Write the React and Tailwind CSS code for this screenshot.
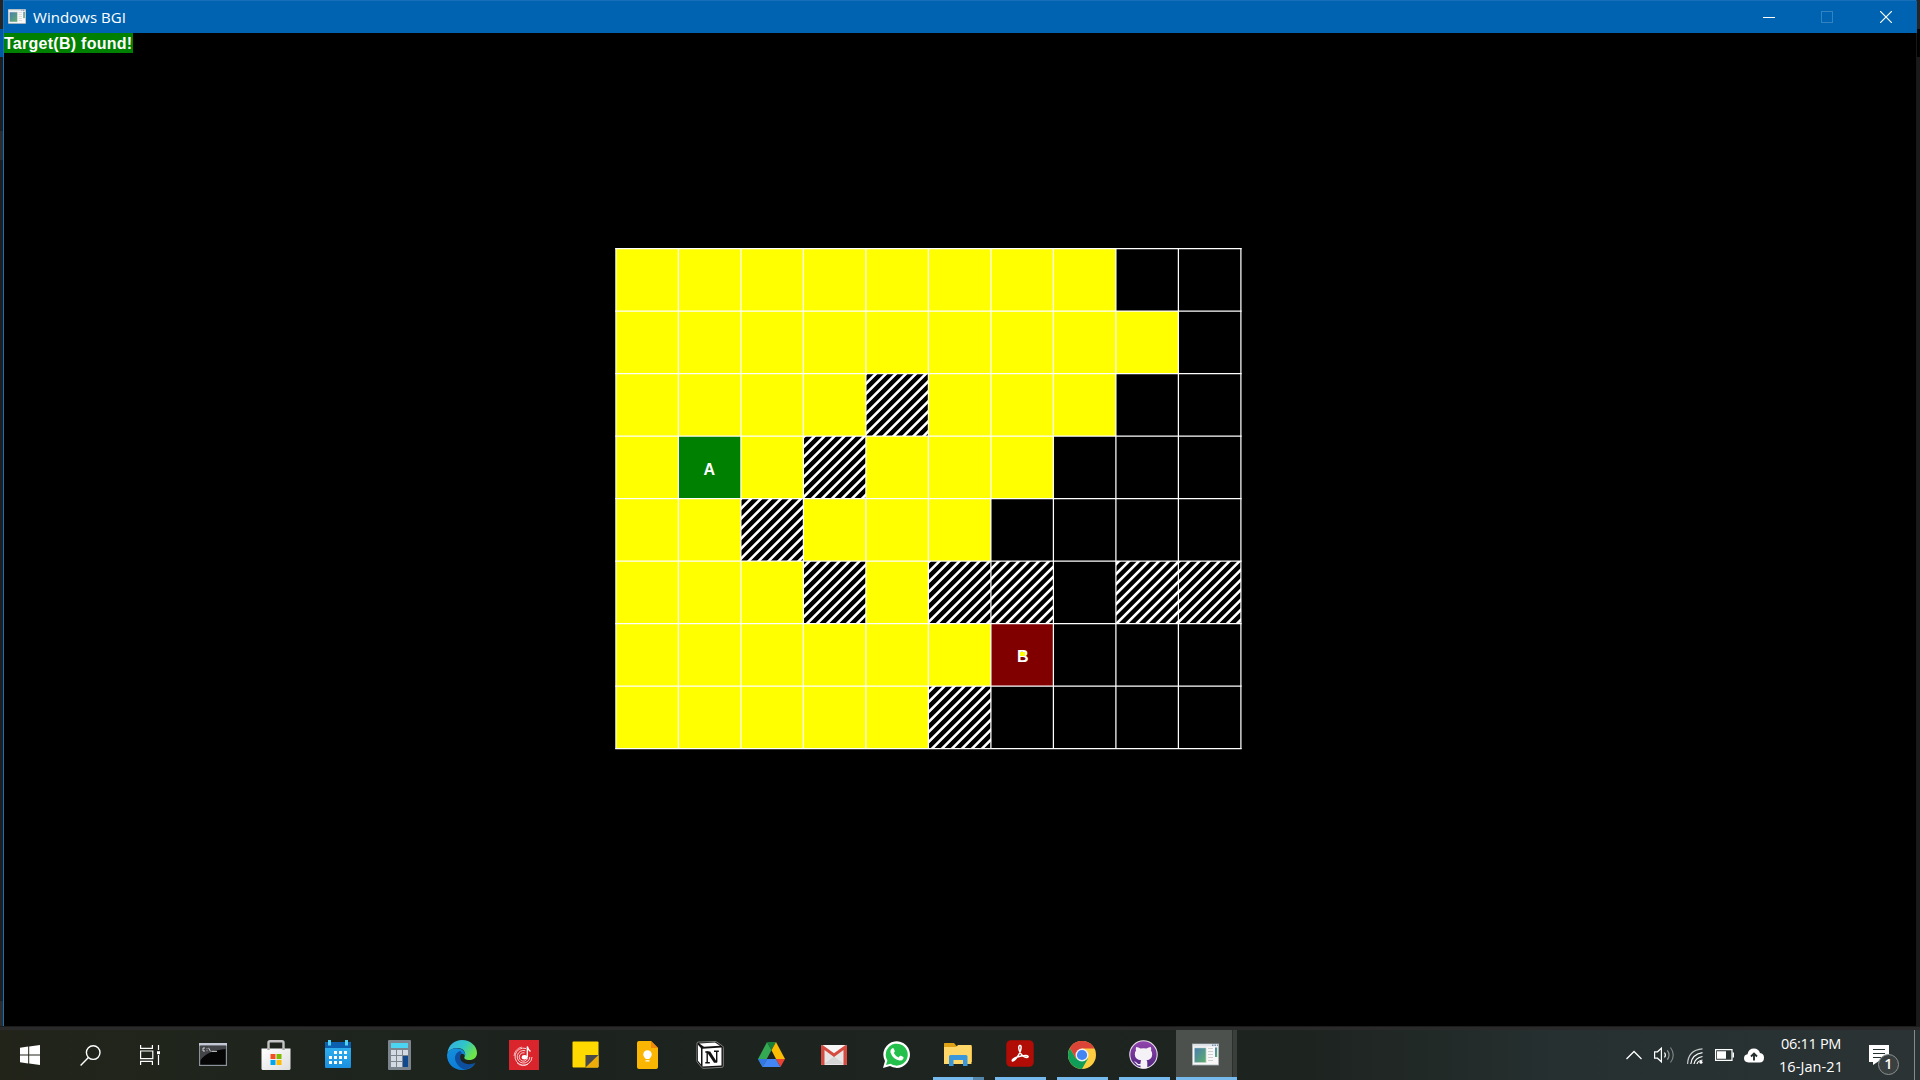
import React from 'react';

// '#' wall, 'y' visited, '.' empty, 'A' start, 'B' target
const MAP = [
  'yyyyyyyy..',
  'yyyyyyyyy.',
  'yyyy#yyy..',
  'yAy#yyy...',
  'yy#yyy....',
  'yyy#y##.##',
  'yyyyyyB...',
  'yyyyy#....',
];

const CELL = {
  y: 'bg-[#ffff00]',
  '.': 'bg-black',
  A: 'bg-[#008000]',
  B: 'bg-[#800000]',
  '#': 'bg-fixed bg-[repeating-linear-gradient(135deg,#fff_0px,#fff_0.6px,#000_1.5px,#000_5.07px,#fff_5.97px,#fff_7.071px)]',
};

function Board() {
  return (
    <div className="relative ml-[612px] mt-[195px] h-[501px] w-[626px]">
      <div className="grid h-[500px] w-[625px] grid-cols-[repeat(10,62.5px)] grid-rows-[repeat(8,62.5px)]">
        {MAP.join('').split('').map((c, i) => (
          <div key={i} className={`flex items-center justify-center ${CELL[c]}`}>
            {c === 'A' && (
              <span className="mt-[6px] mr-[1px] font-['Liberation_Sans',sans-serif] text-[16px] leading-none font-bold text-white">A</span>
            )}
            {c === 'B' && (
              <span className="relative mt-[6px] ml-[1px] font-['Liberation_Sans',sans-serif] text-[16px] leading-none font-bold text-white">
                <span>B</span>
                <i className="absolute top-[3px] left-[3px] h-[4px] w-[5px] bg-[#ffff00]" />
              </span>
            )}
          </div>
        ))}
      </div>
      <svg className="absolute inset-0 overflow-visible" width="626" height="501" stroke="#fff" strokeWidth="1.25">
        {Array.from({ length: 11 }, (_, i) => <path key={`v${i}`} d={`M${i * 62.5 - 0.1} 0V501`} />)}
        {Array.from({ length: 9 }, (_, i) => <path key={`h${i}`} d={`M-.7 ${i * 62.5 + 0.5}H625.6`} />)}
      </svg>
    </div>
  );
}

function WindowIcon({ w, h }) {
  return (
    <svg width={w} height={h} viewBox="0 0 27 22">
      <defs>
        <linearGradient id="scr" x1="0" y1="0" x2="1" y2="1">
          <stop offset="0" stopColor="#4a7fb0" /><stop offset="1" stopColor="#5fae6c" />
        </linearGradient>
      </defs>
      <rect width="27" height="22" fill="#98a0a6" />
      <rect x="0.8" y="0.8" width="25.4" height="20.4" fill="#f8f8f8" />
      <rect x="0.8" y="0.8" width="25.4" height="2.2" fill="#dfe4ea" />
      <path d="M20 1h1.5v1.5H20zM22.5 1H24v1.5h-1.5zM25 1h1v1.5h-1z" fill="#7993b0" />
      <rect x="2" y="4" width="12.5" height="15.5" fill="#d4d8d8" />
      <rect x="2.7" y="4.7" width="11" height="14" fill="url(#scr)" />
      <path d="M16 5h5M16 8h5M16 11h5M16 14h5M16 17h5" stroke="#cfcfcf" strokeWidth="1" />
      <rect x="23" y="4" width="2.2" height="9.5" fill="url(#scr)" />
    </svg>
  );
}

const Start = () => (
  <svg width="20" height="20" viewBox="0 0 20 20" fill="#fff">
    <path d="M0 2.8 8.2 1.6V9.4H0zM9.2 1.4 20 0V9.4H9.2zM0 10.4H8.2V18.4L0 17.2zM9.2 10.4H20V20L9.2 18.5z" />
  </svg>
);
const Search = () => (
  <svg width="21" height="21" viewBox="0 0 21 21" fill="none" stroke="#fff" strokeWidth="1.4">
    <circle cx="13.2" cy="7.6" r="6.8" /><path d="M8.4 12.4 0.6 20.4" />
  </svg>
);
const TaskView = () => (
  <svg width="20" height="20" viewBox="0 0 20 20" fill="none" stroke="#fff" strokeWidth="1.2">
    <path d="M.6 0V3.4H12.4V0M.6 20V16.4H12.4V20M.6 6H12.8V13.6H.6zM18.5 0V5M18.5 10V20" />
    <rect x="17" y="6.2" width="3" height="3" fill="#fff" stroke="none" />
  </svg>
);
const Cmd = () => (
  <svg width="28" height="23" viewBox="0 0 28 23">
    <rect x=".6" y=".6" width="26.8" height="21.8" fill="#050505" stroke="#8b919b" strokeWidth="1.2" />
    <path d="M1 3H27V6C15 7 6 10 1 18z" fill="#424448" />
    <rect x="0" y="0" width="28" height="2.6" fill="#c3c8d4" />
    <path d="M6 5H4v3h2M8 5.4v.8M8 7.4v.8M9.5 4.8l2 3.6M12.5 8.4H18" stroke="#ddd" fill="none" strokeWidth=".9" />
  </svg>
);
const Store = () => (
  <svg width="30" height="30" viewBox="0 0 30 30">
    <defs><linearGradient id="bag" x2="1" y2="1"><stop stopColor="#fff" /><stop offset="1" stopColor="#dedede" /></linearGradient></defs>
    <path d="M7.5 11V2.7Q7.5 1.2 9 1.2H21Q22.5 1.2 22.5 2.7V11" fill="none" stroke="#c4c4c4" strokeWidth="2.4" />
    <path d="M.5 8.5H29.5V28.5Q29.5 30 28 30H2Q.5 30 .5 28.5z" fill="url(#bag)" />
    <path d="M7.5 8V10M22.5 8V10" stroke="#aaa" strokeWidth="2.4" />
    <path d="M9.5 14h5v5h-5z" fill="#f25022" /><path d="M15.5 14h5v5h-5z" fill="#7fba00" />
    <path d="M9.5 20h5v5h-5z" fill="#00a4ef" /><path d="M15.5 20h5v5h-5z" fill="#ffb900" />
  </svg>
);
const Calendar = () => (
  <svg width="26" height="28" viewBox="0 0 26 28">
    <defs><linearGradient id="cal" x2="0" y2="1"><stop stopColor="#33b8f2" /><stop offset="1" stopColor="#1a8fe0" /></linearGradient></defs>
    <rect y="2" width="26" height="26" rx="1" fill="url(#cal)" />
    <path d="M0 3q0-1 1-1H25q1 0 1 1V8H0z" fill="#0c5fae" />
    <path d="M4.5 0V5.5M21.5 0V5.5" stroke="#50d3f5" strokeWidth="3" />
    <path d="M9 11h3v3H9zM14 11h3v3h-3zM19 11h3v3h-3zM4 16h3v3H4zM9 16h3v3H9zM14 16h3v3h-3zM19 16h3v3h-3zM4 21h3v3H4zM9 21h3v3H9zM14 21h3v3h-3z" fill="#fff" />
  </svg>
);
const Calc = () => (
  <svg width="23" height="30" viewBox="0 0 23 30">
    <rect width="23" height="30" rx="1" fill="#7c858e" />
    <rect x="3" y="3" width="17" height="5" fill="#4bd5f2" />
    <path d="M3 10h5v5H3zM9 10h5v5H9zM15 10h5v5h-5zM3 16h5v5H3zM9 16h5v5H9zM3 22h5v5H3zM9 22h5v5H9z" fill="#d3dae1" />
    <path d="M15 16h5v11h-5z" fill="#11498f" />
  </svg>
);
const Edge = () => (
  <svg width="30" height="30" viewBox="0 0 30 30">
    <defs>
      <linearGradient id="e1" x2="1" y2=".5"><stop stopColor="#37a9e8" /><stop offset=".55" stopColor="#2fc5c9" /><stop offset="1" stopColor="#6ee448" /></linearGradient>
      <linearGradient id="e2" x2=".6" y2="1"><stop stopColor="#1590dc" /><stop offset="1" stopColor="#0b7bd5" /></linearGradient>
    </defs>
    <path d="M.4 13C1.5 5 7.5 0 15 0C23.5 0 30 6 30 13C30 17.5 26.5 20 22.5 20C18.5 20 16.5 18.500 17.5 17C19.5 14 17.5 8 10.5 8C6 8 2 10 .4 13z" fill="url(#e1)" />
    <path d="M0 15C.5 10.5 5 8 10 8.2C16 8.5 19.5 12.5 17.8 16.400C17.5 13 13 12.500 12 17C11 22 17 26 22 25.5C25 25.2 27 24 28.3 23C26 27.5 21 30 15 30C6.5 30 0 23.5 0 15z" fill="url(#e2)" />
    <path d="M12.8 11C8 13 7 18 9 22C11 26 14.5 29 18 29.7C23 28.6 26.500 26 28.3 22.8C24 25 18 24.5 15.3 21.8C12.5 19.5 12.5 15 15 13.2C14.5 12 13.8 11.2 12.8 11z" fill="#0d4f9e" />
  </svg>
);
const Music = () => (
  <svg width="30" height="30" viewBox="0 0 30 30">
    <rect width="30" height="30" fill="#da252c" />
    <g fill="none" stroke="#fff" strokeWidth=".8">
      <path d="M17 8.5A8.500 8.500 0 1 0 23 17M16.300 10.7A6.3 6.300 0 1 0 20.8 17M15.5 12.9A4.2 4.2 0 1 0 18.6 17.5" />
      <path d="M5 16A9.500 9.500 0 0 1 13 7M8 23A9.5 9.500 0 0 0 19 24.300" strokeWidth=".6" />
      <path d="M18.3 17V6.5Q19 9.500 21.5 11.5" strokeWidth="1.3" />
    </g>
    <ellipse cx="15.5" cy="17.200" rx="2.8" ry="2.2" fill="#fff" />
  </svg>
);
const Sticky = () => (
  <svg width="27" height="27" viewBox="0 0 27 27">
    <rect x=".5" y=".5" width="26" height="26" rx="1" fill="#ffd900" />
    <path d="M26.5 14v11.5q0 1-1 1H13.5z" fill="#efad0c" />
    <path d="M13.5 14h13L13.5 26.5z" fill="#494949" />
  </svg>
);
const Keep = () => (
  <svg width="21" height="28" viewBox="0 0 21 28">
    <path d="M2 0H14L21 7V26q0 2-2 2H2q-2 0-2-2V2q0-2 2-2z" fill="#fbb604" />
    <path d="M14 0l7 7h-7z" fill="#f08a0c" />
    <circle cx="10.5" cy="13.5" r="4.2" fill="#fff" /><path d="M8.5 15h4v3h-4zM8.5 19.2h4v1.2h-4z" fill="#fff" />
  </svg>
);
const Notion = () => (
  <svg width="28" height="28" viewBox="0 0 28 28">
    <path d="M1 2.2Q1 1.2 2.2 1.1L19 .5Q20 .4 21 1.2L26.5 5Q27.3 5.6 27.3 6.5V25Q27.3 26.2 26 26.3L8 27.3Q6.5 27.4 5.8 26.5L1.2 21Q.8 20.5.8 19.5z" fill="#111" stroke="#aaa" strokeWidth=".7" />
    <path d="M3.2 2.5 19 1.6 24 4.8 8 5.8z" fill="#fff" />
    <path d="M6.5 7.7 25.5 6.6V24.5L6.5 25.6z" fill="#fff" />
    <path d="M2 3.8 5 7.3V23.5L2 19.8z" fill="#fff" />
    <path d="M11.2 11V21.800M9.3 21.8H13.8M20.700 10.500V21M18 10.300H22.800M9.300 11H12.500" fill="none" stroke="#111" strokeWidth="1.4" />
    <path d="M10.5 10.5H14.200L21.4 21.7H18z" fill="#111" />
  </svg>
);
const Drive = () => (
  <svg width="27" height="25" viewBox="0 0 27 25">
    <path d="M9 0 13.5 8 4.5 25 0 17z" fill="#34a853" />
    <path d="M9 0H18L13.5 8.2z" fill="#188038" />
    <path d="M18 0 27 17H18L13.5 8.2z" fill="#fbbc04" />
    <path d="M4.5 25 9 17H18L22.5 25z" fill="#4285f4" />
    <path d="M0 17H9L4.5 25z" fill="#3576e6" /><path d="M18 17H27L22.5 25z" fill="#ea4335" />
  </svg>
);
const Gmail = () => (
  <svg width="26" height="20" viewBox="0 0 26 20">
    <rect width="26" height="20" rx="1.5" fill="#e6e6e6" />
    <path d="M3 19 13 11.5 23 19z" fill="#d5d5d5" />
    <path d="M2 0H24L13 8.5z" fill="#f6f6f6" />
    <path d="M0 1.5Q0 0 1.5 0L13 8.2 24.5 0Q26 0 26 1.5V18.5Q26 20 24.5 20H22.5V5L13 12 3.5 5V20H1.5Q0 20 0 18.5z" fill="#d54b3f" />
  </svg>
);
const WhatsApp = () => (
  <svg width="27" height="27" viewBox="0 0 27 27">
    <path d="M0 27 2 20A13.3 13.3 0 1 1 7 25.1z" fill="#fff" />
    <path d="M3 24 4.4 19.5A11 11 0 1 1 7.6 22.8z" fill="#25c04c" />
    <path d="M9.5 7.2Q10.3 6.8 10.8 7.8L11.8 10Q12 10.7 10.8 12 12.5 15.3 15.5 16.4L16.8 14.9Q17.3 14.5 18 14.8L20.3 16Q20.8 16.4 20.3 17.7 19.2 19.8 16.5 19.5 9.8 18.2 7.5 11.5 7 8.5 9.5 7.2z" fill="#fff" />
  </svg>
);
const Folder = () => (
  <svg width="28" height="24" viewBox="0 0 28 24">
    <path d="M0 1.5Q0 1 .8 1H10l2.5 3H27Q28 4 28 5V20H0z" fill="#dfa116" />
    <path d="M0 5H12l2-2H27.5V22H0z" fill="#ffd768" />
    <path d="M5 24V14.5Q5 13 6.5 13H22Q23.5 13 23.5 14.5V24H19V18H9.500V24z" fill="#3b97db" />
  </svg>
);
const Acrobat = () => (
  <svg width="28" height="27" viewBox="0 0 28 27">
    <rect x=".3" y=".3" width="27.4" height="26.4" rx="4.5" fill="#b10c05" />
    <path d="M13.7 5.5Q15.5 5 15 8.5 14.5 13 10 18.5 7 21.8 6.3 20.8 5.8 19.2 10.5 17.3 15.5 15.5 20 15.6 22.6 15.8 22 17 21 18.2 17.5 16.3 13.5 13.5 12.7 8 12.6 5.8 13.7 5.5z" fill="none" stroke="#fff" strokeWidth="1.5" />
  </svg>
);
const Chrome = () => (
  <svg width="28" height="28" viewBox="0 0 28 28">
    <circle cx="14" cy="14" r="14" fill="#ffcd40" />
    <path d="M1.9 7A14 14 0 0 0 14 28L20 17.5 8 17.5z" fill="#0f9d58" />
    <path d="M1.9 7A14 14 0 0 1 26.5 7.5H14L8 17.5z" fill="#db4437" />
    <circle cx="14" cy="14" r="6.5" fill="#f1f1f1" /><circle cx="14" cy="14" r="5.1" fill="#4285f4" />
  </svg>
);
const Github = () => (
  <svg width="29" height="29" viewBox="0 0 29 29">
    <defs><linearGradient id="gh" x2="0" y2="1"><stop stopColor="#9345ae" /><stop offset="1" stopColor="#4f2580" /></linearGradient></defs>
    <circle cx="14.5" cy="14.5" r="13.7" fill="url(#gh)" stroke="#e5dfe9" strokeWidth="1.1" />
    <path d="M7.2 7Q9.5 7 11.5 8.6 14.5 7.8 17.5 8.6 19.5 7 21.8 7 22.6 9 22 10.5 23.3 12 23.2 14.5 23 19.5 17.5 20.3 18.3 21.3 18.3 22.5V28Q14.5 29 11.5 28V25.5Q8.5 26 7.4 24 6.7 22.5 5 21.7 6.5 21 8.3 23.2 9.6 24.5 11.5 23.8 11.5 21.5 12.2 20.3 6 19.5 5.8 14.5 5.7 12 7 10.5 6.4 9 7.2 7z" fill="#f5f2f7" />
  </svg>
);

// [icon, padding that seats it in its slot, running state]
const APPS = [
  [Cmd, 'pb-[1px]'], [Store, 'pl-[1px]'], [Calendar, 'pl-[2px] pb-[2px]'], [Calc, 'pl-[1px]'], [Edge, 'pl-[2px]'],
  [Music, 'pl-[2px]'], [Sticky, 'pl-[1px] pb-[1px]'], [Keep, 'pl-[1px]'], [Notion, 'pl-[2px]'], [Drive, 'pl-[1px] pb-[1px]'],
  [Gmail, 'pl-[2px]'], [WhatsApp, 'pl-[3px] pb-[1px]'],
  [Folder, 'pl-[2px] pb-[2px]', 'multi'], [Acrobat, 'pl-[2px] pb-[3px]', 'run'], [Chrome, 'pl-[2px]', 'run'], [Github, 'pl-[1px] pb-[1px]', 'run'],
];

function Taskbar() {
  return (
    <div className="flex h-[50px] bg-[linear-gradient(90deg,#22241a_0px,#1f251d_250px,#1c231e_520px,#1e2520_1000px,#1d231f_1300px,#263030_1560px,#2b3334_1920px)]">
      {[Start, Search, TaskView].map((Icon, i) => (
        <div key={i} className="flex w-[60px] items-center justify-center"><Icon /></div>
      ))}
      <div className="ml-[2px] flex">
        {APPS.map(([Icon, seat, state], i) => (
          <div key={i} className={`relative flex w-[62px] items-center justify-center ${seat}`}>
            <Icon />
            {state && (
              <div className="absolute bottom-0 left-[7px] flex h-[3px] w-[51px] bg-[#76b9ed]">
                {state === 'multi' && <div className="ml-auto h-full w-[11px] bg-[#5587ad]" />}
              </div>
            )}
          </div>
        ))}
        <div className="relative ml-[2px] flex w-[61px] bg-[#3a3f3b]">
          <div className="flex w-[57px] items-center justify-center border-r border-[#2c302d] bg-[#4d514d] pb-[1px] pl-[3px]">
            <WindowIcon w={27} h={23} />
          </div>
          <div className="absolute bottom-0 left-0 h-[3px] w-[61px] bg-[#76b9ed]" />
        </div>
      </div>
      <div className="ml-auto flex items-center">
        <svg width="16" height="10" viewBox="0 0 16 10" className="mr-[12px]" fill="none" stroke="#fff" strokeWidth="1.3"><path d="M.5 9 8 1.5 15.5 9" /></svg>
        <svg width="21" height="18" viewBox="0 0 21 18" className="mr-[12px]" fill="none" stroke="#fff" strokeWidth="1.2">
          <path d="M.6 5.8H3.5L7.4 2.2V15.8L3.5 12.2H.6z" />
          <path d="M10.5 6.5Q12.3 9 10.5 11.5" /><path d="M13.3 4.3Q16.8 9 13.3 13.7" opacity=".5" /><path d="M16.5 1.5Q22 9 16.5 16.5" opacity=".4" />
        </svg>
        <svg width="16" height="16" viewBox="0 0 16 16" className="mt-[1px] mr-[12px]" fill="none" stroke="#fff" strokeWidth="1.2">
          <path d="M.6 16Q1 2 15.5.8" opacity=".75" /><path d="M3.8 16Q4.5 6.5 15.5 4.6M7 16Q8 10 15.5 8.5M10 16Q10.5 13 15.5 12" />
          <circle cx="14" cy="14.2" r="1.5" fill="#fff" stroke="none" />
        </svg>
        <svg width="19" height="12" viewBox="0 0 19 12" className="mr-[10px]">
          <path d="M.6.6H17V11.4H.6z" fill="none" stroke="#fff" strokeWidth="1.2" /><path d="M17.5 3.5H19V8.5H17.5zM2 2.2H11V9.8H2z" fill="#fff" />
        </svg>
        <svg width="20" height="15" viewBox="0 0 20 15">
          <path d="M4.5 14.5Q0 14 0 10.3 0 6.8 3.5 6.3 4.5.5 10 .5 14.5.5 16 5 20 5.5 20 9.7 20 14.5 15.5 14.5z" fill="#fff" />
          <path d="M10 12.5V6.5M7 8.5 10 5.5 13 8.5" stroke="#263030" strokeWidth="1.9" fill="none" />
        </svg>
        <div className="ml-[6px] flex w-[82px] flex-col items-center pb-px font-['Open_Sans',sans-serif] text-[14.5px] leading-[23px] text-white">
          <span className="tracking-[-0.3px] whitespace-nowrap">06:11 PM</span>
          <span className="tracking-[0.1px] whitespace-nowrap">16-Jan-21</span>
        </div>
        <div className="relative ml-[17px] h-[20px] w-[20px]">
          <svg width="20" height="20" viewBox="0 0 20 20"><path d="M0 0H20V16H10L4 20V17H0z" fill="#fff" /><path d="M4 4.5H16M4 8.5H16M4 12.5H12" stroke="#263030" strokeWidth="1.2" /></svg>
          <div className="absolute top-[9px] left-[9px] flex h-[21px] w-[21px] items-center justify-center rounded-full border border-[#8d9292] bg-[#3a3f40] font-['Open_Sans',sans-serif] text-[14.5px] leading-none font-semibold text-white">1</div>
        </div>
        <div className="ml-[25px] h-[50px] w-px bg-[#858a8b]" />
        <div className="w-[5px]" />
      </div>
    </div>
  );
}

export default function App() {
  return (
    <div className="flex h-[1080px] w-[1920px] flex-col overflow-hidden bg-black">
      <div className="flex h-[1026px]">
        <div className="flex w-[3px] flex-col bg-[#1e1e1e]">
          <div className="h-[29px] bg-[#252526]" />
          <div className="h-[28px] bg-[#0059a3]" />
          <div className="h-[74px]" />
          <div className="h-[29px] bg-[#2d2d30]" />
          <div className="mt-auto h-[25px] bg-[#2d2d2d]" />
        </div>
        <div className="flex w-[1914px] flex-col border-t border-r border-l border-t-[#1a70b8] border-r-[#181818] border-l-[#1a6fb5] bg-black">
          <div className="-mr-px flex h-[32px] items-center bg-[#0063b1]">
            <div className="ml-[4px] pb-[2px]"><WindowIcon w={18} h={15} /></div>
            <span className="ml-[7px] font-['Open_Sans',sans-serif] text-[15px] leading-none tracking-[0.05px] text-white">Windows BGI</span>
            <div className="ml-auto flex items-center">
              <div className="mr-[46px] h-px w-[12px] bg-white" />
              <div className="mr-[47px] h-[12px] w-[12px] border border-[#3383c1]" />
              <svg width="12" height="12" viewBox="0 0 12 12" className="mr-[25px]" stroke="#fff" strokeWidth="1.2"><path d="M0 0 12 12M12 0 0 12" /></svg>
            </div>
          </div>
          <div className="flex h-[20px] w-[129px] items-center bg-[#008000] pt-[2px] font-['Liberation_Sans',sans-serif] text-[16px] leading-none font-bold whitespace-nowrap text-white">
            <span className="tracking-[0.27px]">Target(B) found!</span>
          </div>
          <Board />
        </div>
        <div className="flex w-[3px] flex-col bg-[#1a1a1a]">
          <div className="h-[29px] bg-[#252526]" />
          <div className="h-[28px] bg-black" />
        </div>
      </div>
      <div className="h-[4px] border-t border-[#1c1c1c] bg-[#2a2a2a]" />
      <Taskbar />
    </div>
  );
}
